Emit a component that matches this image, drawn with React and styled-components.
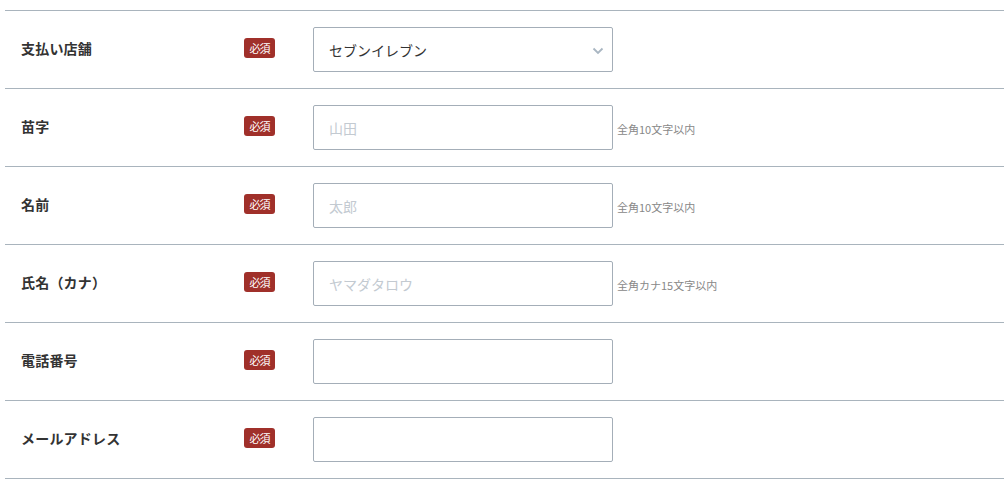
import styled, { createGlobalStyle } from 'styled-components';

const GlobalStyle = createGlobalStyle`
  html, body {
    margin: 0;
    padding: 0;
    background: #fff;
  }
  body {
    font-family: "Noto Sans CJK JP", "Noto Sans", sans-serif;
    color: #333;
  }
`;

const Form = styled.div`
  margin: 10px 4px 0 5px;
  border-bottom: 1px solid #a9b4bd;
`;

const Row = styled.div`
  display: flex;
  align-items: center;
  height: 77px;
  border-top: 1px solid #a9b4bd;
`;

const Label = styled.div`
  width: 223px;
  padding-left: 16px;
  margin-top: -3px;
  font-size: 14px;
  line-height: 1;
  font-weight: 700;
  color: #333;
  letter-spacing: 0.2px;
`;

const Badge = styled.span`
  display: inline-flex;
  align-items: center;
  justify-content: center;
  width: 31px;
  height: 20px;
  margin-right: 38px;
  margin-top: -4px;
  border-radius: 3px;
  background: #a0302a;
  color: #fff;
  font-size: 11px;
  letter-spacing: -1px;
`;

const Field = styled.div`
  position: relative;
  box-sizing: border-box;
  width: 300px;
  height: 45px;
  border: 1px solid #a4aeb8;
  border-radius: 2px;
  display: flex;
  align-items: center;
  padding-left: 15px;
  font-size: 14px;
  color: ${({ $placeholder }) => ($placeholder ? '#c3cad1' : '#333')};
`;

const Chevron = styled.svg`
  position: absolute;
  right: 8px;
  top: 19px;
`;

const Hint = styled.span`
  margin-left: 4px;
  margin-top: 2px;
  font-size: 11px;
  color: #888;
`;

const rows = [
  { label: '支払い店舗', value: 'セブンイレブン', select: true },
  { label: '苗字', placeholder: '山田', hint: '全角10文字以内' },
  { label: '名前', placeholder: '太郎', hint: '全角10文字以内' },
  { label: '氏名（カナ）', placeholder: 'ヤマダタロウ', hint: '全角カナ15文字以内' },
  { label: '電話番号' },
  { label: 'メールアドレス' },
];

export default function App() {
  return (
    <>
      <GlobalStyle />
      <Form>
        {rows.map((r) => (
          <Row key={r.label}>
            <Label>{r.label}</Label>
            <Badge>必須</Badge>
            <Field $placeholder={!r.value}>
              {r.value || r.placeholder}
              {r.select && (
                <Chevron width="12" height="8" viewBox="0 0 12 8">
                  <path d="M1.5 1.5 L6 6 L10.5 1.5" fill="none" stroke="#a9b6c2" strokeWidth="1.8" />
                </Chevron>
              )}
            </Field>
            {r.hint && <Hint>{r.hint}</Hint>}
          </Row>
        ))}
      </Form>
    </>
  );
}
